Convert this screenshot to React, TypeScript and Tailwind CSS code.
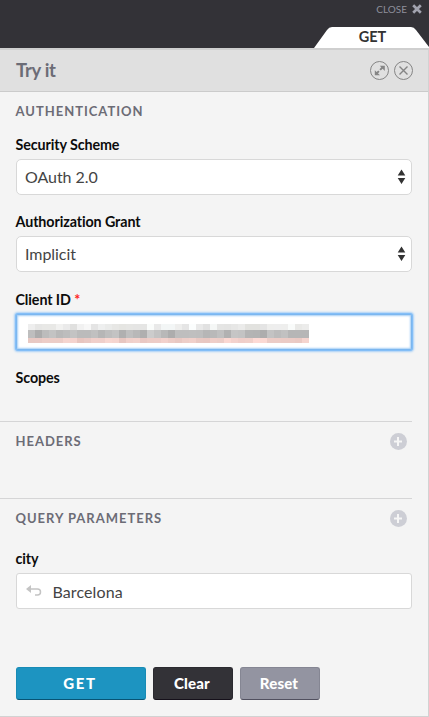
import React from "react";

const TOP = "eeeeee e6e6e5 e8e8e6 e8e8e6 f1f1f0 eaeaea e0e0df f1f1f1 f7f7f7 e4e4e4 eeefef eaebea e7e7e5 e5e5e2 e6e6e4 e5e5e4 e5e5e4 fafcfb e9e9e9 f3f6f6 f3f6f6 eeeeed e5e5e5 fbfdfd e9e9e9 e1e1e1 f5f7f6 e5e5e4 e4e4e3 e7e7e6 ebebea e2e2df e2e2df e4e4e4 eeeeed eeeeee eeeeed f9fbfa e9e9e7 ececeb".split(" ");
const MID = "bebebe acacac bcbcbc c3c3c3 b9b9b9 bdbdbd c3c3c3 bbbbbb bbbbbb c0c0c0 b6b6b6 bebebe c3c3c3 b0b0b0 bfbfbf b8b8b8 afafaf cccccc c3c3c3 b8b8b8 adadad bebebe bebebe bfbfbf bebebe b6b6b6 b9b9b9 c0c0c0 b1b1b1 c5c5c5 c3c3c3 b4b4b4 b3b3b3 adadad c3c3c3 bcbcbc c1c1c1 b6b6b6 b6b6b6 b6b6b6".split(" ");
const LOW = "e8c9c3 e9c9c4 edcdc7 eccdc7 eccdc7 f5d5cf f4d3ce e7c5bf e9c9c4 f0cfca efcfca f7d7d1 f5d5cf e7c6c0 f0d0ca f2d2cc e9c8c3 ecccc6 edccc7 f2d1cc ecccc6 e8c8c2 edcec8 f0d0ca e8c8c2 e8c7c1 efcec8 eccdc7 fbd8d2 f3d2cd efcec9 f0d0ca fddad5 fbd9d3 ecccc6 ecccc6 ebcbc5 ebcbc5 eac9c3 f5d4ce".split(" ");

function Mosaic() {
  const row = (colors: string[], cls: string) => (
    <div className={`flex ${cls}`}>
      {colors.map((c, i) => (
        <span key={i} className="w-[7.03px] shrink-0" style={{ backgroundColor: `#${c}` }} />
      ))}
    </div>
  );
  return (
    <div>
      {row(TOP, "h-[6px]")}
      {row(MID, "h-[8px]")}
      {row(LOW, "h-[5px]")}
    </div>
  );
}

function Label({ children }: { children: React.ReactNode }) {
  return (
    <div className="-ml-[0.5px] h-5 text-[14.3px] leading-5 font-bold tracking-[-0.1px] text-[#0c0c0c]">{children}</div>
  );
}

function SelectBox({ value }: { value: string }) {
  return (
    <div className="flex h-9 items-center justify-between rounded-[5px] border border-[#d8d8d8] bg-white pr-[5px] pl-2 text-[16px] tracking-[-0.05px] text-[#444]">
      <span>{value}</span>
      <svg width="9" height="15" viewBox="0 0 9 15" className="mb-px shrink-0">
        <path d="M4.5 .5 8.3 6.5H.7zM4.5 15 .7 9h7.6z" fill="#333" />
      </svg>
    </div>
  );
}

function SectionTitle({ text, add }: { text: string; add?: boolean }) {
  return (
    <div className="flex h-[39px] items-center justify-between pr-[5px] pl-[15.5px]">
      <span className="text-[13px] font-bold tracking-[0.98px] text-[#6c6c76]">{text}</span>
      {add && (
        <svg width="17" height="17" viewBox="0 0 17 17">
          <circle cx="8.5" cy="8.5" r="8.5" fill="#cdced5" />
          <path d="M8 4v9M4 8.5h8" stroke="#f6f6f6" strokeWidth="2" />
        </svg>
      )}
    </div>
  );
}

export default function App() {
  return (
    <div className="flex h-[717px] w-[429px] flex-col overflow-hidden bg-[#f4f4f4] font-['Lato',sans-serif]">
      <header className="flex h-12 shrink-0 flex-col items-end justify-between bg-[#333237]">
        <div className="flex h-[18px] items-center gap-[5px] pr-[7px] text-[10px] text-[#8e8f9b]">
          <span>CLOSE</span>
          <svg width="10" height="10" viewBox="0 0 10 10">
            <path d="m1.2 1.2 7.6 7.6m0-7.6L1.2 8.8" stroke="#a2a3af" strokeWidth="2.7" />
          </svg>
        </div>
        <div className="relative flex h-[21px] w-[115px] items-center justify-center pl-[2px] text-[14.5px] font-bold text-[#333]">
          <svg className="absolute inset-0" width="115" height="21" viewBox="0 0 115 21">
            <path d="M0 21 13 3Q15 0 18 0h79q3 0 5 3l13 17v1z" fill="#fff" />
          </svg>
          <span className="relative mb-[2px] block leading-4">GET</span>
        </div>
      </header>
      <main className="flex grow flex-col border-r border-b border-[#d2d2d2]">
        <div className="flex h-11 shrink-0 items-center justify-between border-t-2 border-b border-t-[#cfcfcf] border-b-[#cbcbcb] bg-[#e0e0e0] pr-[15px] pl-4">
          <h1 className="text-[18.5px] font-bold tracking-[-0.3px] text-[#6c6c76]">Try it</h1>
          <div className="flex gap-[5px]">
            <svg width="19" height="19" viewBox="0 0 19 19" fill="none" stroke="#858585">
              <circle cx="9.5" cy="9.5" r="9" />
              <path d="m6.5 12.5 2.4-2.4m1.2-1.2 2.4-2.4" strokeWidth="1.9" />
              <path d="M9.8 4.8h5V10zM4.8 9.3v5H10z" fill="#858585" stroke="none" />
            </svg>
            <svg width="19" height="19" viewBox="0 0 19 19" fill="none" stroke="#858585">
              <circle cx="9.5" cy="9.5" r="9" />
              <path d="m5.5 5.5 8 8m0-8-8 8" strokeWidth="1.4" />
            </svg>
          </div>
        </div>
        <div className="mr-4 flex grow flex-col">
          <section className="h-[329px]">
            <SectionTitle text="AUTHENTICATION" />
            <div className="pt-1 pl-4">
              <Label>Security Scheme</Label>
              <div className="mt-1"><SelectBox value="OAuth 2.0" /></div>
              <div className="mt-[17px]"><Label>Authorization Grant</Label></div>
              <div className="mt-1"><SelectBox value="Implicit" /></div>
              <div className="mt-[18px]">
                <Label>Client ID <span className="text-[#f22]">*</span></Label>
              </div>
              <div className="mt-1 flex h-9 items-start rounded-[2px] border border-[#7bb6ef] bg-white pt-[9px] pl-[11px] shadow-[0_0_0_1px_#83bef7,0_0_2px_2px_#a8d0f7,inset_0_0_2px_1px_#a5cef6]">
                <Mosaic />
              </div>
              <div className="mt-[18px]"><Label>Scopes</Label></div>
            </div>
          </section>
          <section className="h-[77px] border-t border-[#d5d5d6]">
            <SectionTitle text="HEADERS" add />
          </section>
          <section className="border-t border-[#d5d5d6]">
            <SectionTitle text="QUERY PARAMETERS" add />
            <div className="pt-[11px] pl-4">
              <Label>city</Label>
              <div className="mt-1 flex h-9 items-center rounded-[3px] border border-[#d8d8d8] bg-white pl-[9px] text-[16px] tracking-[0.1px] text-[#444]">
                <svg width="16" height="12" viewBox="0 0 16 12" className="mr-[10.5px]">
                  <path d="M3 4h8.5a3 3 0 0 1 0 6H9" fill="none" stroke="#c4c4c4" strokeWidth="1.5" />
                  <path d="M0 4 5 0v8z" fill="#c4c4c4" />
                </svg>
                <span className="pt-[2px]">Barcelona</span>
              </div>
            </div>
          </section>
          <div className="mt-[58px] ml-4 flex gap-[7px] text-[15px] font-black text-white">
            <button className="h-[33px] w-[130px] rounded-[3px] border border-[#188bb5] border-b-[#075475] bg-[#1d94c1] pr-[2px] tracking-[1.7px]">GET</button>
            <button className="h-[33px] w-20 rounded-[3px] border border-[#2b2a30] border-b-[#15101a] bg-[#333237] pr-[2px] tracking-[0.15px]">Clear</button>
            <button className="h-[33px] w-20 rounded-[3px] border border-[#858693] border-b-[#51505f] bg-[#9394a1] pr-[2px] tracking-[0.15px]">Reset</button>
          </div>
        </div>
      </main>
    </div>
  );
}
